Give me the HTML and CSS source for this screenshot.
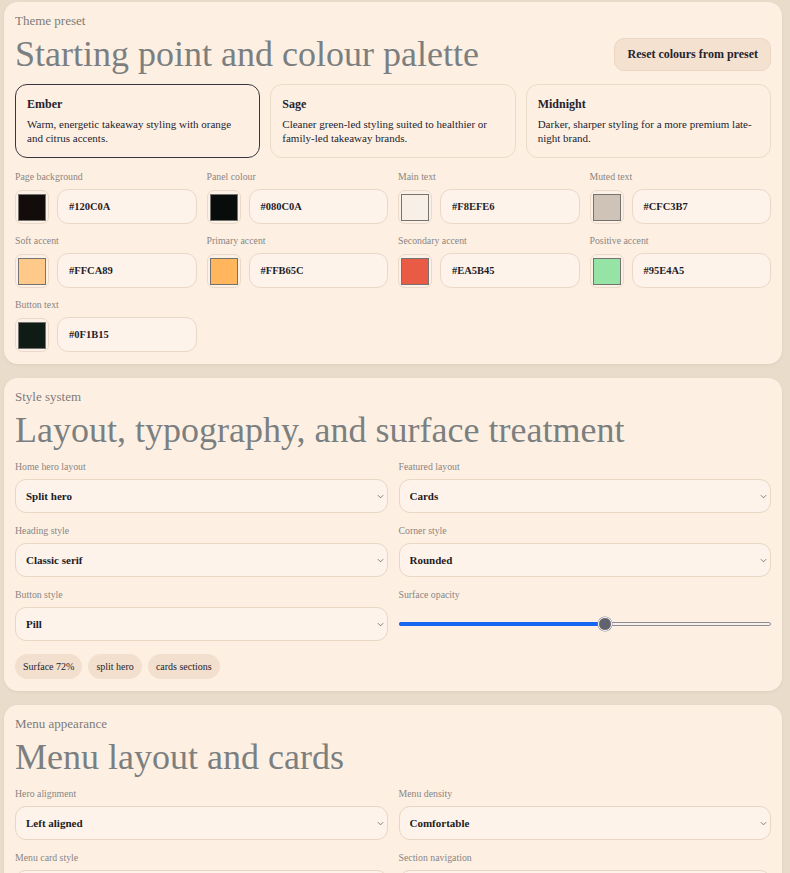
FILE: index.html
```html
<!DOCTYPE html>
<html lang="en">
<head>
<meta charset="utf-8">
<title>Theme settings</title>
<link rel="stylesheet" href="styles.css">
</head>
<body>
<section class="panel">
  <div class="eyebrow">Theme preset</div>
  <div class="head-row">
    <h2 class="title">Starting point and colour palette</h2>
    <button class="btn-soft">Reset colours from preset</button>
  </div>
  <div class="presets">
    <div class="preset active">
      <div class="preset-name">Ember</div>
      <p class="preset-desc">Warm, energetic takeaway styling with orange and citrus accents.</p>
    </div>
    <div class="preset">
      <div class="preset-name">Sage</div>
      <p class="preset-desc">Cleaner green-led styling suited to healthier or family-led takeaway brands.</p>
    </div>
    <div class="preset">
      <div class="preset-name">Midnight</div>
      <p class="preset-desc">Darker, sharper styling for a more premium late-night brand.</p>
    </div>
  </div>
  <div class="colours">
    <div class="field">
      <label class="label">Page background</label>
      <div class="colour-row"><span class="swatch"><span class="chip-col" style="background:#120C0A"></span></span><span class="hex">#120C0A</span></div>
    </div>
    <div class="field">
      <label class="label">Panel colour</label>
      <div class="colour-row"><span class="swatch"><span class="chip-col" style="background:#080C0A"></span></span><span class="hex">#080C0A</span></div>
    </div>
    <div class="field">
      <label class="label">Main text</label>
      <div class="colour-row"><span class="swatch"><span class="chip-col" style="background:#F8EFE6"></span></span><span class="hex">#F8EFE6</span></div>
    </div>
    <div class="field">
      <label class="label">Muted text</label>
      <div class="colour-row"><span class="swatch"><span class="chip-col" style="background:#CFC3B7"></span></span><span class="hex">#CFC3B7</span></div>
    </div>
    <div class="field">
      <label class="label">Soft accent</label>
      <div class="colour-row"><span class="swatch"><span class="chip-col" style="background:#FFCA89"></span></span><span class="hex">#FFCA89</span></div>
    </div>
    <div class="field">
      <label class="label">Primary accent</label>
      <div class="colour-row"><span class="swatch"><span class="chip-col" style="background:#FFB65C"></span></span><span class="hex">#FFB65C</span></div>
    </div>
    <div class="field">
      <label class="label">Secondary accent</label>
      <div class="colour-row"><span class="swatch"><span class="chip-col" style="background:#EA5B45"></span></span><span class="hex">#EA5B45</span></div>
    </div>
    <div class="field">
      <label class="label">Positive accent</label>
      <div class="colour-row"><span class="swatch"><span class="chip-col" style="background:#95E4A5"></span></span><span class="hex">#95E4A5</span></div>
    </div>
    <div class="field">
      <label class="label">Button text</label>
      <div class="colour-row"><span class="swatch"><span class="chip-col" style="background:#0F1B15"></span></span><span class="hex">#0F1B15</span></div>
    </div>
  </div>
</section>

<section class="panel">
  <div class="eyebrow">Style system</div>
  <h2 class="title block">Layout, typography, and surface treatment</h2>
  <div class="form-grid">
    <div class="field">
      <label class="label">Home hero layout</label>
      <div class="select-wrap"><select class="select"><option>Split hero</option></select><svg class="chev" viewBox="0 0 8 5" width="7" height="5"><path d="M1 1 L4 4 L7 1" fill="none" stroke="#6f6c72" stroke-width="1"/></svg></div>
    </div>
    <div class="field">
      <label class="label">Featured layout</label>
      <div class="select-wrap"><select class="select"><option>Cards</option></select><svg class="chev" viewBox="0 0 8 5" width="7" height="5"><path d="M1 1 L4 4 L7 1" fill="none" stroke="#6f6c72" stroke-width="1"/></svg></div>
    </div>
    <div class="field">
      <label class="label">Heading style</label>
      <div class="select-wrap"><select class="select"><option>Classic serif</option></select><svg class="chev" viewBox="0 0 8 5" width="7" height="5"><path d="M1 1 L4 4 L7 1" fill="none" stroke="#6f6c72" stroke-width="1"/></svg></div>
    </div>
    <div class="field">
      <label class="label">Corner style</label>
      <div class="select-wrap"><select class="select"><option>Rounded</option></select><svg class="chev" viewBox="0 0 8 5" width="7" height="5"><path d="M1 1 L4 4 L7 1" fill="none" stroke="#6f6c72" stroke-width="1"/></svg></div>
    </div>
    <div class="field">
      <label class="label">Button style</label>
      <div class="select-wrap"><select class="select"><option>Pill</option></select><svg class="chev" viewBox="0 0 8 5" width="7" height="5"><path d="M1 1 L4 4 L7 1" fill="none" stroke="#6f6c72" stroke-width="1"/></svg></div>
    </div>
    <div class="field">
      <label class="label">Surface opacity</label>
      <div class="range-wrap">
        <div class="range">
          <div class="range-fill" style="width:55.5%"></div>
          <div class="range-thumb" style="left:55.5%"></div>
        </div>
      </div>
    </div>
  </div>
  <div class="chips">
    <span class="chip">Surface 72%</span>
    <span class="chip">split hero</span>
    <span class="chip">cards sections</span>
  </div>
</section>

<section class="panel">
  <div class="eyebrow">Menu appearance</div>
  <h2 class="title block">Menu layout and cards</h2>
  <div class="form-grid">
    <div class="field">
      <label class="label">Hero alignment</label>
      <div class="select-wrap"><select class="select"><option>Left aligned</option></select><svg class="chev" viewBox="0 0 8 5" width="7" height="5"><path d="M1 1 L4 4 L7 1" fill="none" stroke="#6f6c72" stroke-width="1"/></svg></div>
    </div>
    <div class="field">
      <label class="label">Menu density</label>
      <div class="select-wrap"><select class="select"><option>Comfortable</option></select><svg class="chev" viewBox="0 0 8 5" width="7" height="5"><path d="M1 1 L4 4 L7 1" fill="none" stroke="#6f6c72" stroke-width="1"/></svg></div>
    </div>
    <div class="field">
      <label class="label">Menu card style</label>
      <div class="select-wrap"><select class="select"><option>Soft cards</option></select><svg class="chev" viewBox="0 0 8 5" width="7" height="5"><path d="M1 1 L4 4 L7 1" fill="none" stroke="#6f6c72" stroke-width="1"/></svg></div>
    </div>
    <div class="field">
      <label class="label">Section navigation</label>
      <div class="select-wrap"><select class="select"><option>Sticky tabs</option></select><svg class="chev" viewBox="0 0 8 5" width="7" height="5"><path d="M1 1 L4 4 L7 1" fill="none" stroke="#6f6c72" stroke-width="1"/></svg></div>
    </div>
  </div>
</section>
</body>
</html>
```
FILE: styles.css
```css
* { box-sizing: border-box; }

html, body { height: 100%; }

body {
  margin: 0;
  padding: 2px 8px 0 4px;
  background: #eadccb;
  font-family: "Liberation Serif", "DejaVu Serif", serif;
  color: #24232e;
  overflow: hidden;
}

.panel {
  background: #fdf0e3;
  border-radius: 14px;
  padding: 11px 11px 12px;
  margin-bottom: 14px;
  box-shadow: 0 1px 3px rgba(120, 90, 60, 0.10);
}

.eyebrow {
  font-size: 13px;
  line-height: 16px;
  color: #7d7b7a;
}

.head-row {
  display: flex;
  align-items: center;
  justify-content: space-between;
  margin-top: 4px;
  margin-bottom: 8px;
}

.title {
  margin: 0;
  font-family: "Liberation Serif", serif;
  font-weight: normal;
  font-size: 36px;
  line-height: 43px;
  color: #7c7f80;
}

.title.block {
  margin-top: 4px;
  margin-bottom: 9px;
}

.btn-soft {
  font-family: inherit;
  font-weight: bold;
  font-size: 12px;
  color: #26242e;
  background: #f5e1cf;
  border: 1px solid #ecd6c2;
  border-radius: 10px;
  height: 33px;
  padding: 0 12px;
}

.presets {
  display: grid;
  grid-template-columns: repeat(3, 1fr);
  gap: 10px;
}

.preset {
  border: 1px solid #ecdac8;
  border-radius: 12px;
  padding: 12px 11px 12px;
  height: 74px;
  background: #fdf0e3;
}

.preset.active {
  border-color: #3a3640;
}

.preset-name {
  font-weight: bold;
  font-size: 12px;
  line-height: 14px;
}

.preset-desc {
  margin: 6px 0 0;
  font-size: 11px;
  line-height: 14px;
}

.colours {
  display: grid;
  grid-template-columns: repeat(4, 1fr);
  column-gap: 10px;
  row-gap: 11px;
  margin-top: 13px;
}

.field {
  display: flex;
  flex-direction: column;
  min-width: 0;
}

.label {
  font-size: 9.8px;
  line-height: 12px;
  color: #8a8582;
  margin-bottom: 6px;
}

.colour-row {
  display: flex;
  gap: 8px;
  height: 35px;
}

.swatch {
  flex: 0 0 34px;
  height: 34px;
  margin-top: 1px;
  border: 1px solid #ead9c8;
  border-radius: 7px;
  background: #fcf1e7;
  display: flex;
  align-items: center;
  justify-content: center;
}

.chip-col {
  width: 28px;
  height: 27px;
  border: 1px solid #76726f;
}

.hex {
  flex: 1;
  min-width: 0;
  border: 1px solid #ead8c6;
  border-radius: 11px;
  background: #fdf3ea;
  display: flex;
  align-items: center;
  padding-left: 11px;
  font-size: 10.5px;
  font-weight: bold;
  color: #1f1e29;
}

.form-grid {
  display: grid;
  grid-template-columns: 1fr 1fr;
  column-gap: 11px;
  row-gap: 12px;
}

.select-wrap {
  position: relative;
  height: 34px;
}

.select {
  -webkit-appearance: none;
  appearance: none;
  height: 34px;
  width: 100%;
  border: 1px solid #e9d6c3;
  border-radius: 11px;
  background: #fdf3ea;
  font-family: inherit;
  font-size: 11px;
  font-weight: bold;
  color: #1c1b26;
  padding: 0 20px 0 10px;
}

.chev {
  position: absolute;
  right: 4px;
  top: 15px;
  pointer-events: none;
}

.range-wrap {
  height: 34px;
  display: flex;
  align-items: center;
}

.range {
  position: relative;
  width: 100%;
  height: 4px;
  border: 1px solid #8f8c98;
  border-radius: 3px;
  background: #f6efea;
}

.range-fill {
  position: absolute;
  left: -1px;
  top: -1px;
  height: 4px;
  border-radius: 3px;
  background: #1766f2;
}

.range-thumb {
  position: absolute;
  top: 50%;
  width: 14px;
  height: 14px;
  margin-left: -7px;
  margin-top: -7px;
  border-radius: 50%;
  background: #62616e;
  border: 1px solid #ffffff;
  box-shadow: 0 0 0 0.5px #8f8c98;
}

.chips {
  display: flex;
  gap: 6px;
  margin-top: 13px;
}

.chip {
  background: #f3dfcd;
  border-radius: 13px;
  height: 25px;
  padding: 0 8px;
  display: inline-flex;
  align-items: center;
  font-size: 10px;
  color: #26242e;
}
```
